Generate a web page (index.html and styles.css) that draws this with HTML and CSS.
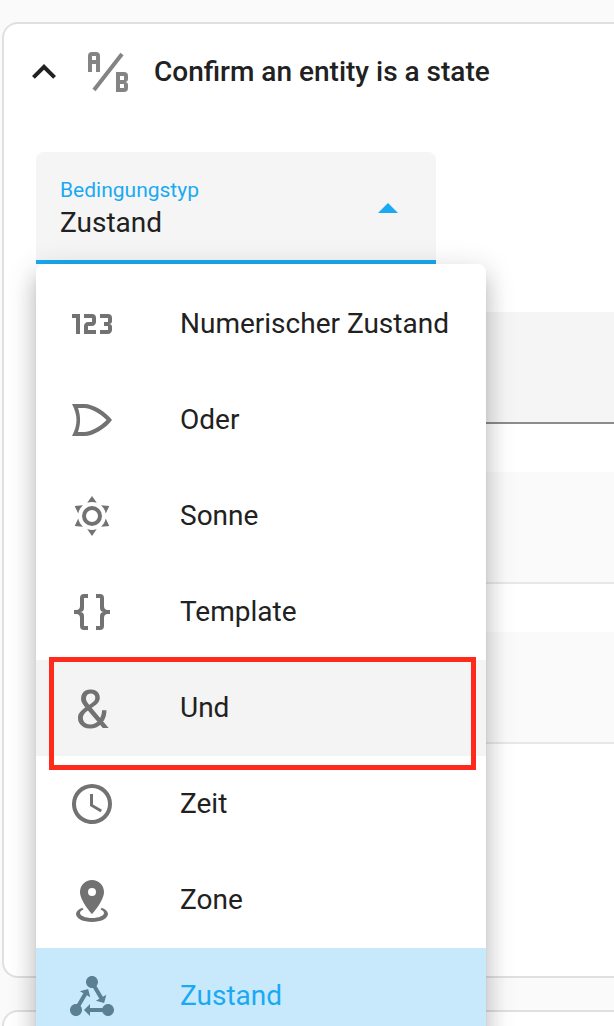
FILE: index.html
```html
<!DOCTYPE html>
<html lang="de">
<head>
    <meta charset="UTF-8">
    <meta name="viewport" content="width=device-width, initial-scale=1.0">
    <title>Bedingungen</title>
    <link rel="stylesheet" href="styles.css">
</head>
<body>

<main class="page">
    <section class="card">
        <div class="card-header">
            <button class="toggle" type="button" aria-label="Einklappen" aria-expanded="true">
                <svg class="icon" viewBox="0 0 24 24"><path d="M7.41,15.41L12,10.83L16.59,15.41L18,14L12,8L6,14L7.41,15.41Z"/></svg>
            </button>
            <svg class="icon icon-type" viewBox="0 0 24 24"><path d="M4 2A2 2 0 0 0 2 4V12H4V8H6V12H8V4A2 2 0 0 0 6 2H4M4 4H6V6H4M22 15.5V14A2 2 0 0 0 20 12H16V22H20A2 2 0 0 0 22 20V18.5A1.54 1.54 0 0 0 20.5 17A1.54 1.54 0 0 0 22 15.5M20 20H18V18H20V20M20 16H18V14H20M5.79 21.61L4.21 20.39L18.21 2.39L19.79 3.61Z"/></svg>
            <h1>Confirm an entity is a state</h1>
        </div>

        <div class="card-content">
            <!-- Bedingungstyp -->
            <div class="type">
                <div class="type-field">
                    <label for="type">Bedingungstyp</label>
                    <select id="type">
                        <option>Numerischer Zustand</option>
                        <option>Oder</option>
                        <option>Sonne</option>
                        <option>Template</option>
                        <option>Und</option>
                        <option>Zeit</option>
                        <option>Zone</option>
                        <option selected>Zustand</option>
                    </select>
                    <svg class="arrow" viewBox="0 0 20 10"><path d="M0 10L10 0L20 10Z"/></svg>
                </div>

                <!-- Geöffnetes Menü -->
                <div class="menu">
                    <button class="item" type="button">
                        <svg class="icon" viewBox="0 0 24 24"><path d="M4,17V9H2V7H6V17H4M22,15C22,16.11 21.1,17 20,17H16V15H20V13H18V11H20V9H16V7H20A2,2 0 0,1 22,9V10.5A1.5,1.5 0 0,1 20.5,12A1.5,1.5 0 0,1 22,13.5V15M14,15V17H8V13C8,11.89 8.9,11 10,11H12V9H8V7H12A2,2 0 0,1 14,9V11C14,12.11 13.1,13 12,13H10V15H14Z"/></svg>
                        <span>Numerischer Zustand</span>
                    </button>
                    <button class="item" type="button">
                        <svg class="icon" viewBox="0 0 24 24"><path d="M2,4C5,10 5,14 2,20H8C13,20 19,16 22,12C19,8 13,4 8,4H2M5,6H8C11.5,6 16.3,9 19.3,12C16.3,15 11.5,18 8,18H5C6.4,13.9 6.4,10.1 5,6Z"/></svg>
                        <span>Oder</span>
                    </button>
                    <button class="item" type="button">
                        <svg class="icon" viewBox="0 0 24 24"><path d="M12,7A5,5 0 0,1 17,12A5,5 0 0,1 12,17A5,5 0 0,1 7,12A5,5 0 0,1 12,7M12,9A3,3 0 0,0 9,12A3,3 0 0,0 12,15A3,3 0 0,0 15,12A3,3 0 0,0 12,9M12,2L14.39,5.42C13.65,5.15 12.84,5 12,5C11.16,5 10.35,5.15 9.61,5.42L12,2M3.34,7L7.5,6.65C6.9,7.16 6.36,7.78 5.94,8.5C5.5,9.24 5.25,10 5.11,10.79L3.34,7M3.36,17L5.12,13.23C5.26,14 5.53,14.78 5.95,15.5C6.37,16.24 6.91,16.86 7.5,17.37L3.36,17M20.65,7L18.88,10.79C18.74,10 18.47,9.23 18.05,8.5C17.63,7.78 17.1,7.15 16.5,6.64L20.65,7M20.64,17L16.5,17.36C17.09,16.85 17.62,16.22 18.04,15.5C18.46,14.77 18.73,14 18.87,13.21L20.64,17M12,22L9.59,18.56C10.33,18.83 11.14,19 12,19C12.82,19 13.63,18.83 14.37,18.56L12,22Z"/></svg>
                        <span>Sonne</span>
                    </button>
                    <button class="item" type="button">
                        <svg class="icon" viewBox="0 0 24 24"><path d="M8,3A2,2 0 0,0 6,5V9A2,2 0 0,1 4,11H3V13H4A2,2 0 0,1 6,15V19A2,2 0 0,0 8,21H10V19H8V14A2,2 0 0,0 6,12A2,2 0 0,0 8,10V5H10V3M16,3A2,2 0 0,1 18,5V9A2,2 0 0,0 20,11H21V13H20A2,2 0 0,0 18,15V19A2,2 0 0,1 16,21H14V19H16V14A2,2 0 0,1 18,12A2,2 0 0,1 16,10V5H14V3H16Z"/></svg>
                        <span>Template</span>
                    </button>
                    <button class="item hovered" type="button">
                        <svg class="icon" viewBox="0 0 24 24"><text class="ampersand" x="12" y="22" text-anchor="middle">&amp;</text></svg>
                        <span>Und</span>
                        <span class="marker"></span>
                    </button>
                    <button class="item" type="button">
                        <svg class="icon" viewBox="0 0 24 24"><path d="M12,20A8,8 0 0,0 20,12A8,8 0 0,0 12,4A8,8 0 0,0 4,12A8,8 0 0,0 12,20M12,2A10,10 0 0,1 22,12A10,10 0 0,1 12,22C6.47,22 2,17.5 2,12A10,10 0 0,1 12,2M12.5,7V12.25L17,14.92L16.25,16.15L11,13V7H12.5Z"/></svg>
                        <span>Zeit</span>
                    </button>
                    <button class="item" type="button">
                        <svg class="icon" viewBox="0 0 24 24"><path d="M12,2C15.31,2 18,4.66 18,7.95C18,12.41 12,19 12,19C12,19 6,12.41 6,7.95C6,4.66 8.69,2 12,2M12,6A2,2 0 0,0 10,8A2,2 0 0,0 12,10A2,2 0 0,0 14,8A2,2 0 0,0 12,6M20,19C20,21.21 16.42,23 12,23C7.58,23 4,21.21 4,19C4,17.71 5.22,16.56 7.11,15.83L7.75,16.74C6.67,17.19 6,17.81 6,18.5C6,19.88 8.69,21 12,21C15.31,21 18,19.88 18,18.5C18,17.81 17.33,17.19 16.25,16.74L16.89,15.83C18.78,16.56 20,17.71 20,19Z"/></svg>
                        <span>Zone</span>
                    </button>
                    <button class="item selected" type="button">
                        <svg class="icon" viewBox="0 0 24 24"><path d="M6.27 17.05C6.72 17.58 7 18.25 7 19C7 20.66 5.66 22 4 22S1 20.66 1 19 2.34 16 4 16C4.18 16 4.36 16 4.53 16.05L7.69 10.58L5.96 9.58L10.06 8.5L11.16 12.58L9.43 11.58L6.27 17.05M20 16C18.7 16 17.6 16.84 17.18 18H11V16L8 19L11 22V20H17.18C17.6 21.16 18.7 22 20 22C21.66 22 23 20.66 23 19S21.66 16 20 16M12 8C12.18 8 12.36 8 12.53 7.95L15.69 13.42L13.96 14.42L18.06 15.5L19.16 11.42L17.43 12.42L14.27 6.95C14.72 6.42 15 5.74 15 5C15 3.34 13.66 2 12 2S9 3.34 9 5 10.34 8 12 8Z"/></svg>
                        <span>Zustand</span>
                    </button>
                </div>
            </div>

            <!-- Felder der Bedingung -->
            <input class="field" type="text" aria-label="Entität">
            <input class="field" type="text" aria-label="Attribut" disabled>
            <input class="field" type="text" aria-label="Status" disabled>
        </div>
    </section>

    <section class="card card-next"></section>
</main>

</body>
</html>
```
FILE: styles.css
```css
* {
    box-sizing: border-box;
}

body {
    margin: 0;
    font-family: Roboto, "Liberation Sans", sans-serif;
    font-size: 28px;
    color: #212121;
    background-color: #fafafa;
}

.page {
    display: flex;
    flex-direction: column;
    gap: 32px;
    height: 100vh;
    padding: 22px 0 0 2px;
    overflow: hidden;
}

.card {
    flex-shrink: 0;
    background-color: #fff;
    border: 2px solid #e0e0e0;
    border-right: none;
    border-radius: 16px 0 0 16px;
}

.card-next {
    height: 96px;
}

.card-header {
    display: flex;
    align-items: center;
    gap: 16px;
    height: 96px;
    padding: 0 16px;
}

h1 {
    margin: 0 0 0 6px;
    font-size: 28px;
    font-weight: 500;
    line-height: 32px;
}

.toggle {
    display: flex;
    padding: 0;
    color: #212121;
    background: none;
    border: none;
    cursor: pointer;
}

.icon {
    flex-shrink: 0;
    width: 48px;
    height: 48px;
    overflow: visible;
    fill: currentColor;
}

.icon-type {
    color: #848484;
}

.card-content {
    display: flex;
    flex-direction: column;
    gap: 48px;
    padding: 32px 0 232px 32px;
}

/* Auswahlfeld */
.type {
    position: relative;
    width: 400px;
}

.type-field {
    position: relative;
    display: flex;
    flex-direction: column;
    height: 112px;
    padding: 24px 24px 0;
    background-color: #f5f5f5;
    border-bottom: 4px solid #1aaaf3;
    border-radius: 8px 8px 0 0;
}

.type-field label {
    font-size: 21px;
    line-height: 28px;
    color: #1aaaf3;
}

.type-field select {
    height: 36px;
    padding: 0;
    font: inherit;
    color: inherit;
    background: none;
    border: none;
    outline: none;
    appearance: none;
}

.arrow {
    position: absolute;
    top: 51px;
    right: 38px;
    width: 20px;
    height: 10px;
    fill: #1aaaf3;
    pointer-events: none;
}

/* Menü */
.menu {
    position: absolute;
    top: 100%;
    left: 0;
    z-index: 1;
    width: 450px;
    padding: 12px 0;
    background-color: #fff;
    border-radius: 8px;
    box-shadow: 0 10px 10px -6px rgba(0, 0, 0, 0.2),
        0 16px 20px 2px rgba(0, 0, 0, 0.14),
        0 6px 28px 4px rgba(0, 0, 0, 0.12);
}

.item {
    position: relative;
    display: flex;
    align-items: center;
    gap: 64px;
    width: 100%;
    height: 96px;
    padding: 0 32px;
    font: inherit;
    line-height: 32px;
    color: #212121;
    text-align: left;
    white-space: nowrap;
    background: none;
    border: none;
    cursor: pointer;
}

.item .icon {
    color: #727272;
}

.item.hovered {
    background-color: #f4f4f4;
}

.item.selected {
    color: #1aaaf3;
    background-color: #c7e9fb;
}

.item.selected .icon {
    color: #5b7f93;
}

.ampersand {
    font-size: 27px;
}

.marker {
    position: absolute;
    top: -3px;
    right: 10px;
    bottom: -14px;
    left: 13px;
    z-index: 1;
    border: 5px solid #ff2a1c;
}

/* Textfelder */
.field {
    width: 100%;
    height: 112px;
    padding: 0 24px;
    font: inherit;
    background-color: #f5f5f5;
    border: none;
    border-bottom: 2px solid #8c8c8c;
    border-radius: 8px 0 0 0;
}

.field:disabled {
    background-color: #fafafa;
    border-bottom-color: #e8e8e8;
}
```
